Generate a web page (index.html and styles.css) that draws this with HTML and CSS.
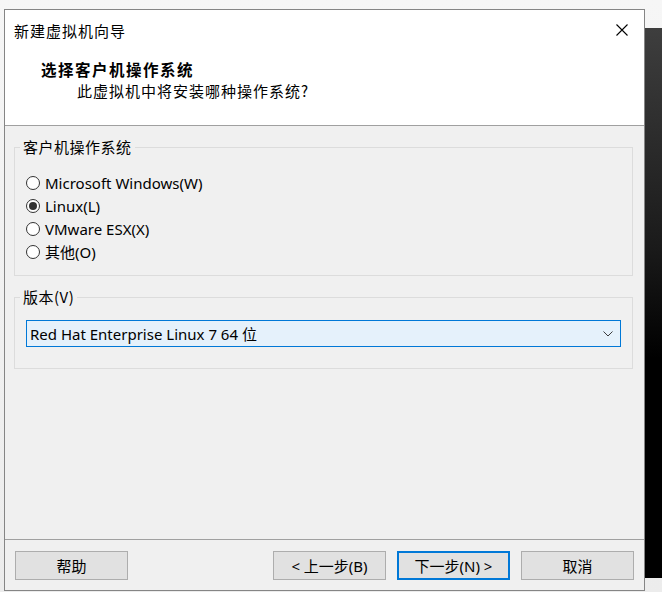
FILE: index.html
```html
<!DOCTYPE html>
<html lang="zh-CN">
<head>
<meta charset="utf-8">
<title>新建虚拟机向导</title>
<link rel="stylesheet" href="styles.css">
</head>
<body>
<div class="window">
  <div class="header">
    <div class="titlebar">
      <span class="title">新建虚拟机向导</span>
      <svg class="close" width="12" height="12" viewBox="0 0 12 12"><path d="M0.5 0.5 L11.5 11.5 M11.5 0.5 L0.5 11.5" stroke="#000" stroke-width="1.1" fill="none"/></svg>
    </div>
    <div class="heading">选择客户机操作系统</div>
    <div class="subheading">此虚拟机中将安装哪种操作系统?</div>
  </div>
  <div class="content">
    <fieldset class="group group-os">
      <legend class="legend">客户机操作系统</legend>
      <div class="radio-row first"><span class="radio"></span><span class="radio-label">Microsoft Windows(W)</span></div>
      <div class="radio-row"><span class="radio checked"></span><span class="radio-label">Linux(L)</span></div>
      <div class="radio-row"><span class="radio"></span><span class="radio-label">VMware ESX(X)</span></div>
      <div class="radio-row"><span class="radio"></span><span class="radio-label">其他(O)</span></div>
    </fieldset>
    <fieldset class="group group-ver">
      <legend class="legend">版本(V)</legend>
      <div class="select">
        <span class="select-text">Red Hat Enterprise Linux 7 64 位</span>
        <svg class="chevron" width="10" height="6" viewBox="0 0 10 6"><path d="M0.5 0.5 L5 5 L9.5 0.5" stroke="#3c3c3c" stroke-width="1" fill="none"/></svg>
      </div>
    </fieldset>
  </div>
  <div class="footer">
    <button class="btn">帮助</button>
    <span class="spacer"></span>
    <button class="btn">&lt; 上一步(B)</button>
    <button class="btn default">下一步(N) &gt;</button>
    <button class="btn">取消</button>
  </div>
</div>
</body>
</html>
```

FILE: styles.css
```css
html, body {
  margin: 0;
  padding: 0;
}
body {
  width: 662px;
  height: 592px;
  overflow: hidden;
  box-sizing: border-box;
  padding: 9px 0 0 4px;
  background:
    linear-gradient(#3e3e3e, #1a1a1a 40%, #000 60%, #000) no-repeat right 0 top 28px / 17px 550px,
    linear-gradient(#f6f6f6, #ececec);
  font-family: "Noto Sans", "Noto Sans CJK SC", sans-serif;
  font-size: 15px;
  color: #000;
}
.window {
  width: 641px;
  height: 582px;
  box-sizing: border-box;
  border: 1px solid #858585;
  background: #f0f0f0;
  display: flex;
  flex-direction: column;
}
.header {
  height: 115px;
  background: #fff;
  border-bottom: 1px solid #a0a0a0;
  flex: none;
}
.titlebar {
  height: 40px;
  display: flex;
  align-items: center;
  justify-content: space-between;
  padding: 0 16px 0 9px;
}
.title {
  font-family: "Noto Sans CJK SC", sans-serif;
  font-size: 15px;
  letter-spacing: 1px;
}
.close {
  display: block;
}
.heading {
  margin-top: 8px;
  padding-left: 36px;
  line-height: 22px;
  font-weight: bold;
  font-family: "Noto Sans CJK SC", sans-serif;
  font-size: 15.5px;
  letter-spacing: 1.5px;
}
.subheading {
  padding-left: 72px;
  line-height: 22px;
  font-family: "Noto Sans CJK SC", sans-serif;
  letter-spacing: 1px;
}
.content {
  flex: 1;
  padding: 11px 11px 0 9px;
  border-bottom: 1px solid #a0a0a0;
}
.group {
  margin: 0;
  padding: 0 11px 0 11px;
  border: 1px solid #dcdcdc;
  min-width: 0;
}
.legend {
  margin-left: -6px;
  padding: 0 3px;
  line-height: 20px;
  font-family: "Noto Sans CJK SC", sans-serif;
  letter-spacing: 0.5px;
}
.group-os {
  padding-top: 13px;
  padding-bottom: 12px;
}
.group-ver {
  margin-top: 11px;
  padding-top: 13px;
  padding-bottom: 21px;
}
.radio-row {
  height: 23px;
  display: flex;
  align-items: center;
  gap: 5px;
}
.radio-row.first {
  height: 24px;
  padding-top: 1px;
  box-sizing: border-box;
}
.radio {
  width: 14px;
  height: 14px;
  box-sizing: border-box;
  border: 1px solid #333;
  border-radius: 50%;
  background: #fff;
  display: flex;
  align-items: center;
  justify-content: center;
  flex: none;
}
.radio.checked::after {
  content: "";
  width: 8px;
  height: 8px;
  border-radius: 50%;
  background: #333;
}
.radio-label {
  line-height: 20px;
}
.select {
  height: 27px;
  box-sizing: border-box;
  border: 1px solid #0078d7;
  background: #e5f1fb;
  display: flex;
  align-items: center;
  justify-content: space-between;
  padding: 0 7px 0 3px;
}
.select-text {
  line-height: 20px;
}
.chevron {
  display: block;
}
.footer {
  height: 50px;
  flex: none;
  box-sizing: border-box;
  padding: 11px 10px 0 10px;
  display: flex;
  align-items: flex-start;
  gap: 11px;
}
.spacer {
  flex: 1;
}
.btn {
  width: 113px;
  height: 29px;
  box-sizing: border-box;
  border: 1px solid #adadad;
  background: #e1e1e1;
  font-family: "Noto Sans", "Noto Sans CJK SC", sans-serif;
  font-size: 15px;
  color: #000;
  padding: 0;
  margin: 0;
}
.btn.default {
  border: 2px solid #0078d7;
}
```
